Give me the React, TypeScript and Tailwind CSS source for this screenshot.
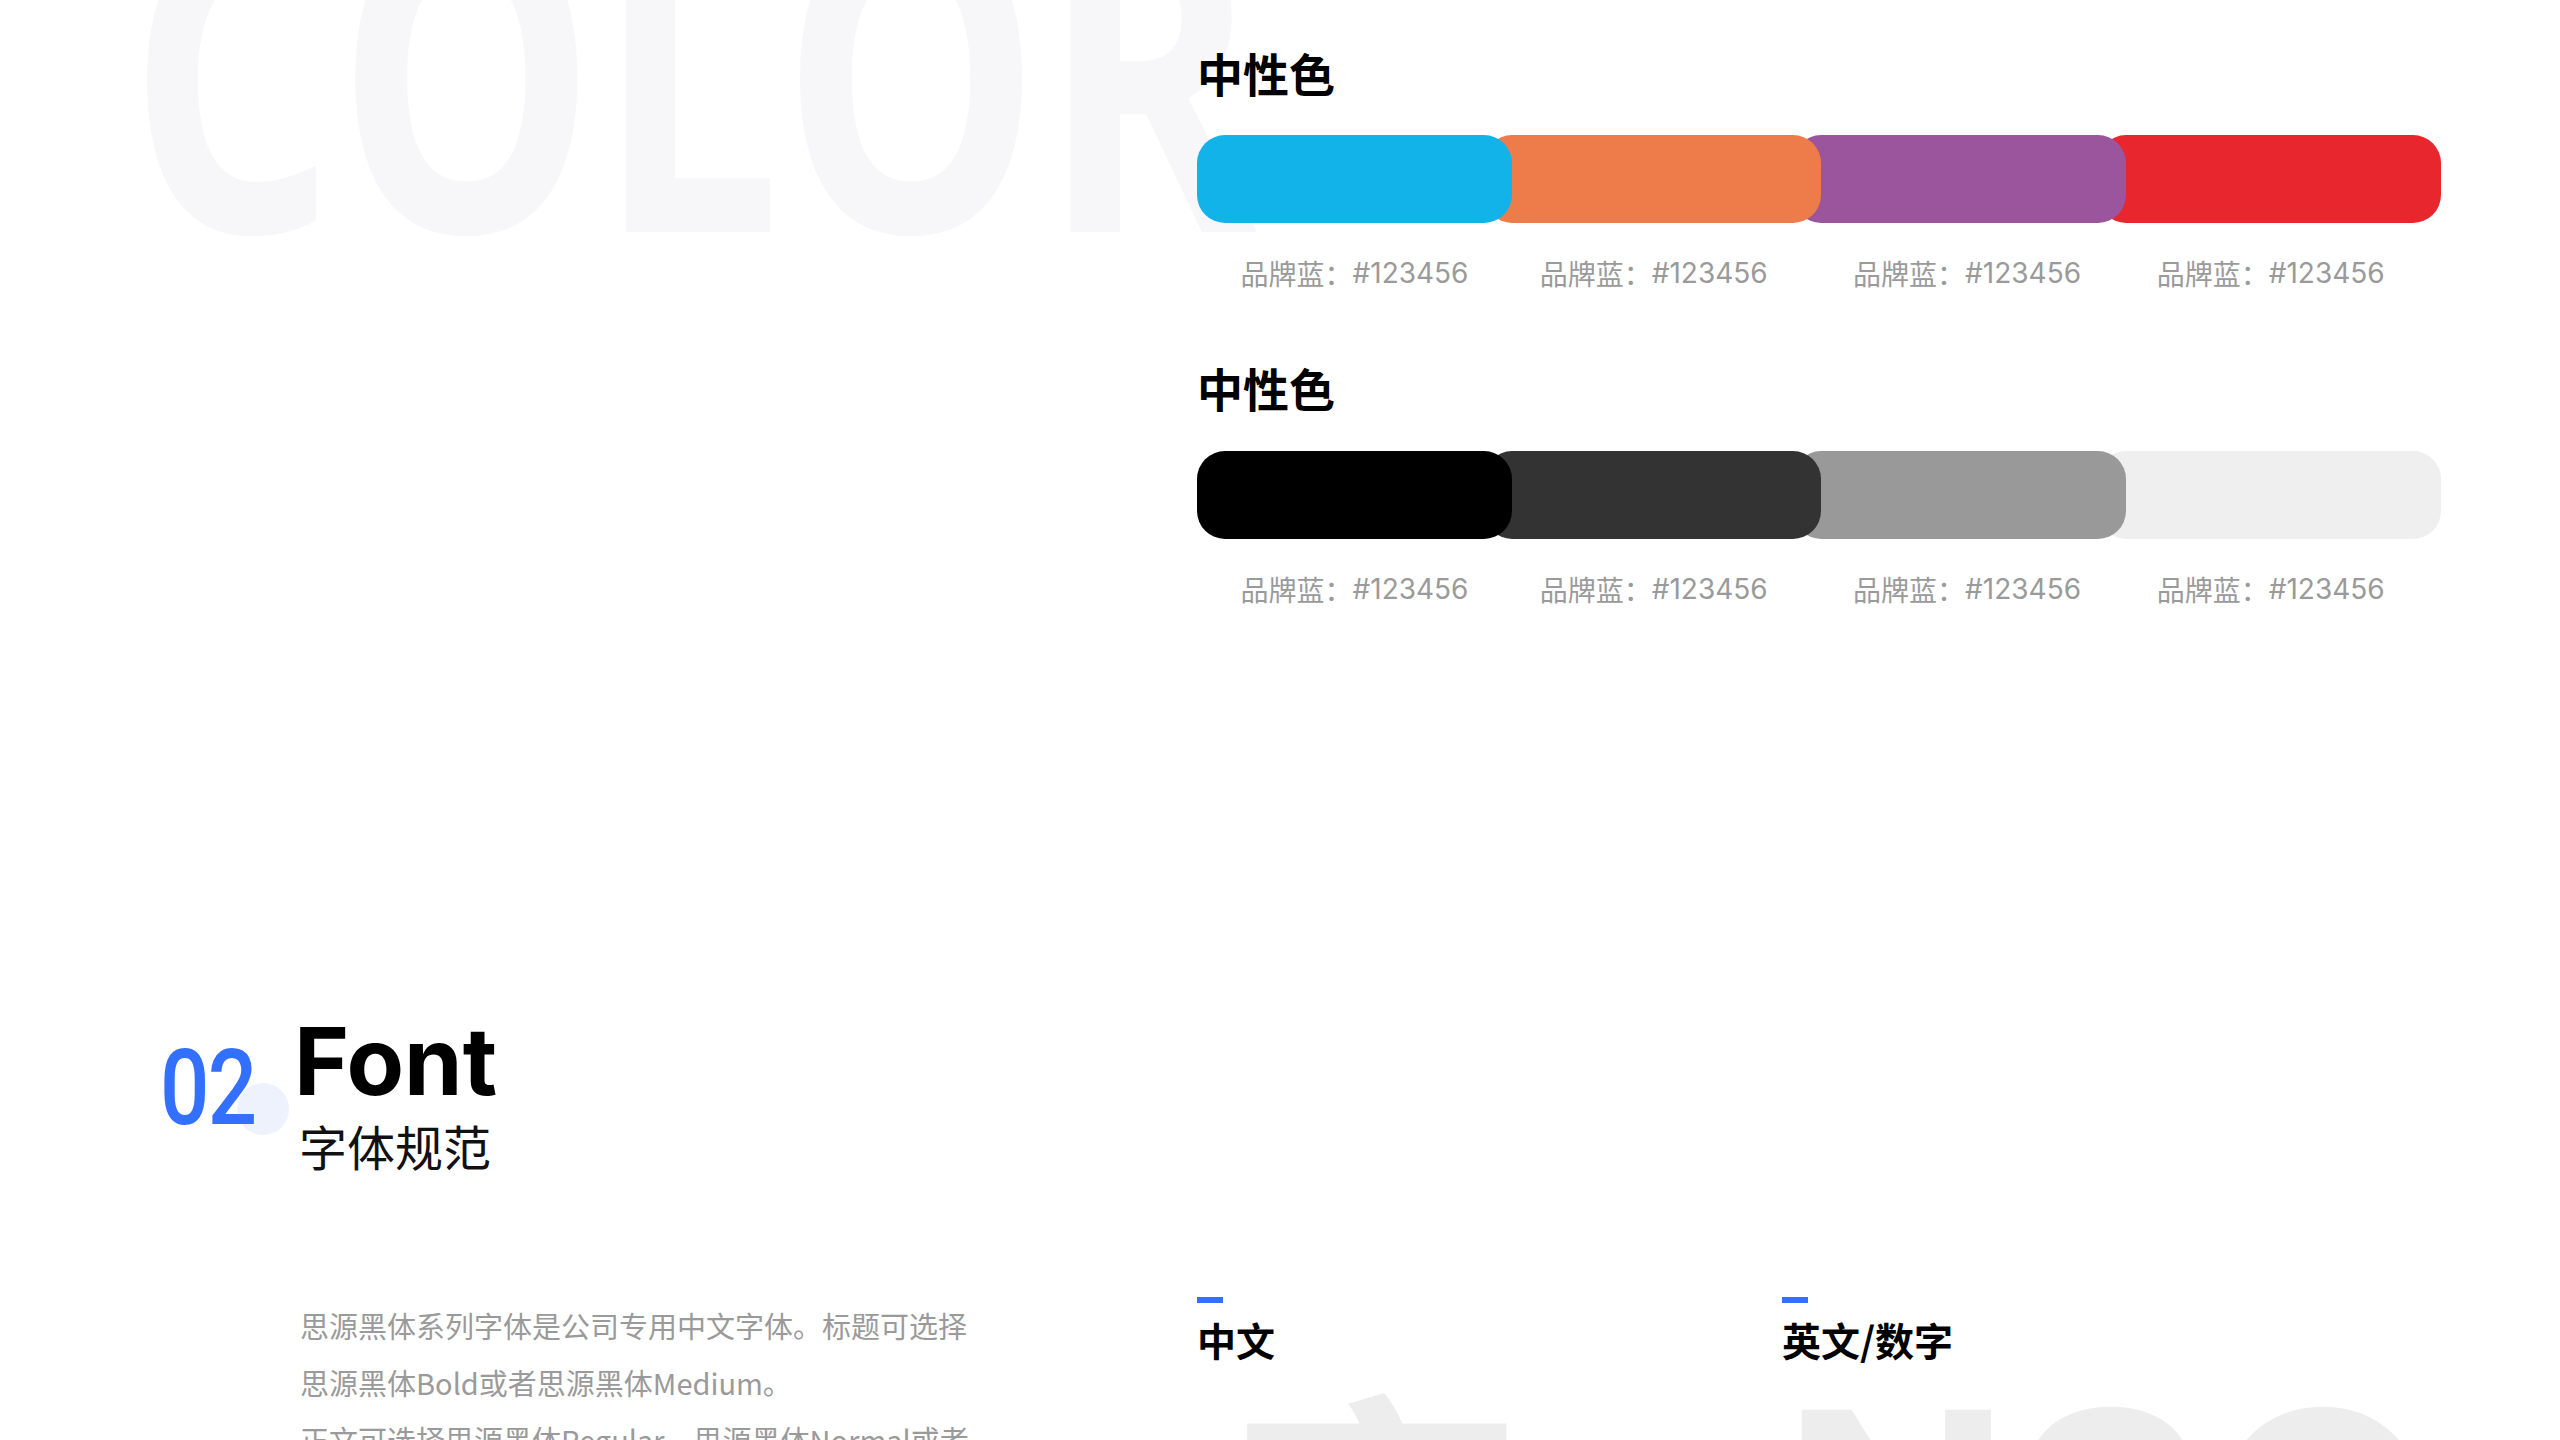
const cjk = { fontFamily: '"Noto Sans CJK SC", "Noto Sans", sans-serif' };
const latin = { fontFamily: 'Inter, "Noto Sans CJK SC", sans-serif' };

const segW = [315, 309, 305, 315];
const labelShift = [0, -8, -4, -8];

function Bar({ colors }: { colors: string[] }) {
  return (
    <div className="flex flex-col">
      <div className="flex h-[88px] w-[1244px]">
        {colors.map((c, i) => (
          <div
            key={i}
            className="h-full rounded-[28px]"
            style={{
              background: c,
              width: segW[i] + (i > 0 ? 28 : 0),
              marginLeft: i > 0 ? -28 : 0,
              zIndex: 10 - i,
              position: 'relative',
            }}
          />
        ))}
      </div>
      <div className="flex w-[1244px] mt-[32px]">
        {colors.map((_, i) => (
          <div key={i} className="flex justify-center text-[28px] leading-[36px] text-[#9a9a9a]" style={{ width: segW[i], ...cjk }}>
            <div className="flex" style={{ transform: `translateX(${labelShift[i] * 1.6}px)` }}>
              <span>品牌蓝：</span><span style={latin}>#123456</span>
            </div>
          </div>
        ))}
      </div>
    </div>
  );
}

export default function App() {
  return (
    <div className="relative w-[2560px] h-[1440px] overflow-hidden bg-white" style={cjk}>
      <div
        className="absolute left-[128px] top-[-150px] text-[430px] leading-none font-bold text-[#f7f7f9] tracking-[0px] select-none origin-left scale-x-[0.76]"
        style={{ fontFamily: '"Open Sans", sans-serif' }}
      >
        COLOR
      </div>

      <div className="relative flex flex-col pl-[1197px] pt-[44px]">
        <div className="text-[46px] leading-[56px] font-bold text-black">中性色</div>
        <div className="mt-[35px]"><Bar colors={['#12b3e8', '#ee7b4a', '#9b559d', '#e8262d']} /></div>
        <div className="mt-[68px] text-[46px] leading-[56px] font-bold text-black">中性色</div>
        <div className="mt-[36px]"><Bar colors={['#000000', '#333333', '#999999', '#efefef']} /></div>
      </div>

      <div className="relative flex pl-[160px] mt-[404px]">
        <div className="relative w-[134px] pt-[22px]">
          <div className="absolute left-[77px] top-[72px] w-[52px] h-[52px] rounded-full bg-[#eef2fd]" />
          <div className="relative text-[106px] leading-[110px] font-medium text-[#3370ff] tracking-[-2px] origin-left scale-x-[0.82]" style={{ fontFamily: 'Roboto, sans-serif' }}>02</div>
        </div>
        <div className="flex flex-col">
          <div className="text-[94px] leading-[100px] font-bold text-black" style={latin}>Font</div>
          <div className="mt-[4px] ml-[5px] text-[48px] leading-[60px] text-[#111]">字体规范</div>
        </div>
      </div>

      <div className="relative flex mt-[122px]">
        <div className="pl-[300px] w-[1197px] pt-[0px] text-[29px] leading-[57px] text-[#9a9a9a]">
          <div>思源黑体系列字体是公司专用中文字体。标题可选择</div>
          <div>思源黑体Bold或者思源黑体Medium。</div>
          <div>正文可选择思源黑体Regular、思源黑体Normal或者</div>
        </div>
        <div className="w-[585px] flex flex-col">
          <div className="w-[26px] h-[6px] bg-[#3370ff]" />
          <div className="mt-[12px] text-[39px] leading-[48px] font-bold text-black">中文</div>
          <div className="mt-[6px] ml-[30px] text-[300px] leading-none font-bold text-[#ededed]">字</div>
        </div>
        <div className="flex flex-col">
          <div className="w-[26px] h-[6px] bg-[#3370ff]" />
          <div className="mt-[12px] text-[39px] leading-[48px] font-bold text-black">英文/数字</div>
          <div className="mt-[6px] text-[300px] leading-none font-bold text-[#ededed]" style={latin}>NSO</div>
        </div>
      </div>
    </div>
  );
}
